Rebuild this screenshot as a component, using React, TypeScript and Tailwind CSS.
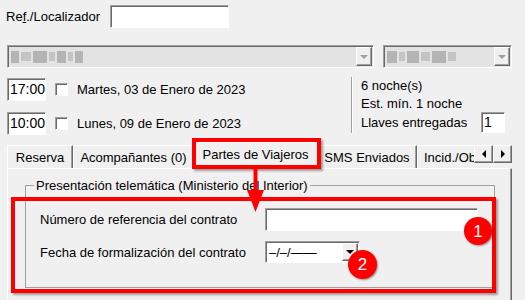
import React from "react";

const sunken =
  "border border-t-[#a0a0a0] border-l-[#a0a0a0] border-r-white border-b-white shadow-[inset_1px_1px_0_#696969]";
const raised =
  "border border-t-white border-l-white border-r-[#696969] border-b-[#696969] shadow-[inset_-1px_-1px_0_#a0a0a0]";

function Blur({ widths }: { widths: number[] }) {
  return (
    <div className="flex items-center gap-[2px] blur-[0.6px]">
      {widths.map((w, i) => (
        <span
          key={i}
          className={i % 2 ? "h-[9px] bg-[#c4c4c4]" : "h-[12px] bg-[#b4b4b4]"}
          style={{ width: w }}
        />
      ))}
    </div>
  );
}

function DropButton({ disabled }: { disabled?: boolean }) {
  return (
    <div className={`w-[16px] h-full bg-[#f0f0f0] flex items-center justify-center ${raised}`}>
      <span
        className={`w-0 h-0 border-l-[4px] border-r-[4px] border-t-[4px] border-l-transparent border-r-transparent ${
          disabled ? "border-t-[#a0a0a0]" : "border-t-black"
        }`}
      />
    </div>
  );
}

function Combo({ width, blur }: { width: number; blur: number[] }) {
  return (
    <div className={`h-[23px] bg-[#e3e3e3] flex items-stretch p-[1px] ${sunken}`} style={{ width }}>
      <div className="flex-1 flex items-center pl-[2px]">
        <Blur widths={blur} />
      </div>
      <DropButton disabled />
    </div>
  );
}

function DateRow({ time, label }: { time: string; label: string }) {
  return (
    <div className="flex items-center h-[23px]">
      <div className={`w-[39px] h-[23px] bg-white flex items-center pl-[2px] text-[14px] ${sunken}`}>{time}</div>
      <div className={`ml-[9px] w-[13px] h-[13px] bg-white ${sunken}`} />
      <span className="ml-[9px]">{label}</span>
    </div>
  );
}

const tabs = [
  { label: "Reserva", w: 66 },
  { label: "Acompañantes (0)", w: 121 },
  { label: "Partes de Viajeros", w: 125, active: true },
  { label: "SMS Enviados", w: 100 },
  { label: "Incid./Observaciones", w: 120, left: true },
];

export default function App() {
  return (
    <div className="w-[525px] h-[300px] bg-[#f0f0f0] relative overflow-hidden text-[13px] leading-[15px] text-black font-['Liberation_Sans',Arial,sans-serif]">
      {/* Ref */}
      <div className="flex items-center pt-[5px] pl-[6px]">
        <span>
          Re<u>f</u>./Localizador
        </span>
        <div className={`ml-[10px] w-[119px] h-[23px] bg-white ${sunken}`} />
      </div>

      {/* Combos */}
      <div className="flex gap-[9px] mt-[17px] pl-[7px]">
        <Combo width={367} blur={[8, 10, 14, 6, 9, 5, 8]} />
        <Combo width={129} blur={[10, 6, 12, 9, 14, 8]} />
      </div>

      {/* Dates */}
      <div className="flex mt-[10px]">
        <div className="w-[351px] pl-[7px] flex flex-col gap-[11px]">
          <DateRow time="17:00" label="Martes, 03 de Enero de 2023" />
          <DateRow time="10:00" label="Lunes, 09 de Enero de 2023" />
        </div>
        <div className="w-[154px] h-[56px] -mt-[1px] border-l border-[#a0a0a0] shadow-[inset_1px_0_0_white] pl-[9px] flex flex-col">
          <div className="h-[18px] flex items-center">6 noche(s)</div>
          <div className="h-[18px] flex items-center">Est. mín. 1 noche</div>
          <div className="h-[21px] flex items-center">
            <span>Llaves entregadas</span>
            <div className={`ml-auto w-[24px] h-[21px] bg-white flex items-center pl-[2px] text-[14px] ${sunken}`}>1</div>
          </div>
        </div>
      </div>

      {/* Tabs */}
      <div className="flex items-end h-[26px] mt-[7px] pl-[7px] relative z-10">
        <div className="w-[467px] h-full flex items-end overflow-hidden">
          {tabs.map((t) =>
            t.active ? (
              <div
                key={t.label}
                className="shrink-0 h-[27px] -mb-px -mx-[1px] bg-[#f0f0f0] border-t border-l border-white border-r border-r-[#696969] flex items-center justify-center pb-[3px] relative z-10"
                style={{ width: t.w }}
              >
                {t.label}
              </div>
            ) : (
              <div
                key={t.label}
                className={`shrink-0 h-[23px] bg-[#f0f0f0] border-t border-l border-white border-r border-r-[#696969] shadow-[inset_-1px_0_0_#a0a0a0] flex items-center whitespace-nowrap overflow-hidden ${
                  t.left ? "justify-start pl-[6px]" : "justify-center"
                }`}
                style={{ width: t.w }}
              >
                {t.label}
              </div>
            )
          )}
        </div>
        <div className="flex self-start mt-[3px]">
          <div className={`w-[19px] h-[18px] bg-[#f0f0f0] flex items-center justify-center ${raised}`}>
            <span className="w-0 h-0 border-t-[4px] border-b-[4px] border-r-[4px] border-t-transparent border-b-transparent border-r-black" />
          </div>
          <div className={`w-[19px] h-[18px] bg-[#f0f0f0] flex items-center justify-center ${raised}`}>
            <span className="w-0 h-0 border-t-[4px] border-b-[4px] border-l-[4px] border-t-transparent border-b-transparent border-l-black" />
          </div>
        </div>
      </div>

      {/* Panel */}
      <div className="ml-[7px] w-[505px] h-[200px] border-t border-l border-white border-r border-r-[#696969] shadow-[inset_-1px_0_0_#a0a0a0]">
        <fieldset className="ml-[17px] mt-[9px] w-[470px] h-[110px] border border-[#a0a0a0]">
          <legend className="ml-[8px] px-[2px]">Presentación telemática (Ministerio del Interior)</legend>
          <div className="pl-[14px]">
            <div className="flex items-center h-[23px] mt-[15px]">
              <span className="w-[225px]">Número de referencia del contrato</span>
              <div className={`w-[213px] h-[23px] bg-white ${sunken}`} />
            </div>
            <div className="flex items-center h-[22px] mt-[10px]">
              <span className="w-[225px]">Fecha de formalización del contrato</span>
              <div className={`w-[95px] h-[22px] bg-white flex items-stretch p-[1px] ${sunken}`}>
                <span className="flex-1 flex items-center pl-[2px]">–/–/——</span>
                <DropButton />
              </div>
            </div>
          </div>
        </fieldset>
      </div>

      {/* Annotations */}
      <div className="absolute left-[192px] top-[138px] w-[129px] h-[31px] border-4 border-[#ff0000] shadow-[2px_2px_2px_rgba(0,0,0,0.35)] z-20" />
      <svg className="absolute left-[244px] top-[165px] z-20" width="22" height="50" viewBox="0 0 22 50">
        <rect x="9.5" y="0" width="4" height="27" fill="#ff0000" />
        <polygon points="3,25 20,25 11.5,47" fill="#ff0000" />
      </svg>
      <div className="absolute left-[11px] top-[197px] w-[485px] h-[96px] border-4 border-[#ff0000] shadow-[2px_2px_2px_rgba(0,0,0,0.35)] z-20" />
      <div className="absolute left-[464px] top-[217px] w-[28px] h-[28px] rounded-full bg-[#ff0000] text-white text-[17px] flex items-center justify-center shadow-[1px_1px_2px_rgba(0,0,0,0.4)] z-30">
        1
      </div>
      <div className="absolute left-[348px] top-[250px] w-[29px] h-[29px] rounded-full bg-[#ff0000] text-white text-[17px] flex items-center justify-center shadow-[1px_1px_2px_rgba(0,0,0,0.4)] z-30">
        2
      </div>
    </div>
  );
}
